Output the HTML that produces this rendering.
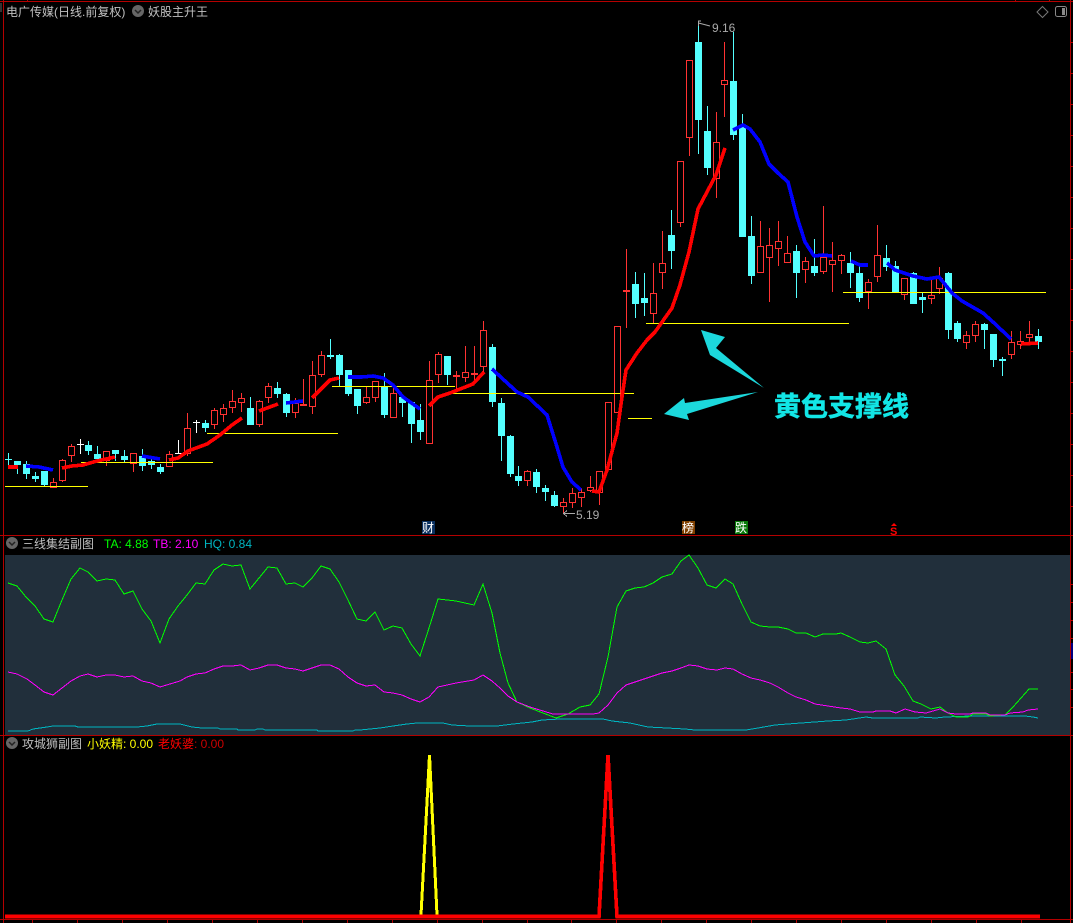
<!DOCTYPE html>
<html><head><meta charset="utf-8"><style>
html,body{margin:0;padding:0;background:#000;width:1073px;height:923px;overflow:hidden}
svg{display:block}
text{font-family:"WenQuanYi Zen Hei","Liberation Sans","Noto Sans CJK SC",sans-serif;font-size:12px}
.l{font-family:"Liberation Sans",sans-serif}
</style></head><body>
<svg width="1073" height="923" viewBox="0 0 1073 923" xmlns="http://www.w3.org/2000/svg">
<rect width="1073" height="923" fill="#000"/>
<rect x="5" y="555" width="1065" height="180" fill="#212f3b"/>
<g shape-rendering="crispEdges">
<path fill="none" stroke="#b40000" d="M0 1.5H1073M3.5 0V923M1070.5 0V923M0 535.5H1073M0 735.5H1073M0 919.5H1073"/>
<path fill="none" stroke="#b40000" d="M27.5 0V1M1015.5 0V1M1049.5 0V1M437.5 920V923M482.5 920V923M527.5 920V923M571.5 920V923M616.5 920V923M392.5 920V923M347.5 920V923M302.5 920V923M257.5 920V923M212.5 920V923M167.5 920V923M122.5 920V923M77.5 920V923M32.5 920V923M661.5 920V923M706.5 920V923M751.5 920V923M796.5 920V923M841.5 920V923M886.5 920V923M931.5 920V923M976.5 920V923M1021.5 920V923M1071 197.5H1073M1071 228.5H1073M1071 259.5H1073M1071 289.5H1073M1071 320.5H1073M1071 351.5H1073M1071 382.5H1073M1071 166.5H1073M1071 135.5H1073M1071 104.5H1073M1071 73.5H1073M1071 42.5H1073M1071 413.5H1073M1071 444.5H1073M1071 475.5H1073M1071 506.5H1073M1071 584.5H1073M1071 602.5H1073M1071 620.5H1073M1071 638.5H1073M1071 672.5H1073M1071 689.5H1073M1071 707.5H1073"/>
<rect x="1071" y="643" width="2" height="16" fill="#000080"/>
<rect x="0" y="3" width="2" height="9" fill="#333"/>

<!-- wicks -->
<path fill="none" stroke="#ff3232" d="M53.5 478V488M62.5 459V482M71.5 444V462M106.5 451V466M133.5 453V472M169.5 451V467M187.5 413V456M214.5 408V429M223.5 404V422M232.5 390V413M241.5 393V412M259.5 400V427M268.5 383V403M295.5 398V418M303.5 379V405M312.5 361V414M321.5 351V377M366.5 387V404M375.5 381V402M393.5 386V418M429.5 361V444M438.5 352V383M456.5 371V389M465.5 346V382M474.5 346V384M483.5 321V374M527.5 470V486M563.5 498V514M572.5 488V508M581.5 488V507M590.5 476V492M599.5 471V505M626.5 249V328M653.5 263V323M662.5 231V289M680.5 161V227M689.5 60V156M716.5 112V198M724.5 42V117M760.5 221V273M769.5 228V302M778.5 221V266M787.5 236V263M805.5 257V283M823.5 206V274M832.5 242V292M841.5 254V274M868.5 279V309M877.5 225V282M904.5 278V300M931.5 280V304M939.5 267V294M966.5 331V349M975.5 321V342M1011.5 331V359M1020.5 331V349M1029.5 321V345"/>
<path fill="none" stroke="#54ffff" d="M8.5 453V466M17.5 461V474M26.5 461V479M35.5 472V482M44.5 471V487M88.5 441V455M97.5 446V461M115.5 450V461M124.5 450V462M142.5 449V471M151.5 459V469M160.5 464V474M205.5 420V432M250.5 397V425M277.5 382V398M286.5 393V417M330.5 339V359M339.5 354V386M348.5 370V396M357.5 389V414M384.5 373V418M402.5 395V417M411.5 401V443M420.5 404V440M447.5 356V385M492.5 344V407M501.5 398V461M510.5 435V477M518.5 466V486M536.5 469V493M545.5 485V501M554.5 491V507M635.5 272V318M644.5 273V316M671.5 210V269M698.5 21V154M707.5 106V175M733.5 32V140M742.5 114V237M751.5 216V284M796.5 245V298M814.5 239V276M850.5 252V288M859.5 266V302M886.5 245V271M895.5 261V292M913.5 272V304M922.5 293V313M948.5 272V339M957.5 321V342M984.5 323V349M993.5 334V367M1002.5 357V376M1038.5 329V349"/>
<path fill="none" stroke="#ffffff" d="M80.5 439V454M77 444.5H84M178.5 440V454M175 453.5H182M196.5 420V433M193 422.5H200"/>

<!-- hollow red bodies -->
<g fill="#000" stroke="#ff3232">
<rect x="50.5" y="482.5" width="6" height="5"/><rect x="59.5" y="460.5" width="6" height="20"/><rect x="68.5" y="446.5" width="6" height="9"/><rect x="103.5" y="451.5" width="6" height="9"/><rect x="130.5" y="453.5" width="6" height="10"/><rect x="166.5" y="454.5" width="6" height="12"/><rect x="184.5" y="428.5" width="6" height="25"/><rect x="211.5" y="410.5" width="6" height="14"/><rect x="220.5" y="408.5" width="6" height="6"/><rect x="229.5" y="401.5" width="6" height="6"/><rect x="238.5" y="398.5" width="6" height="4"/><rect x="256.5" y="401.5" width="6" height="23"/><rect x="265.5" y="386.5" width="6" height="11"/><rect x="292.5" y="403.5" width="6" height="9"/><rect x="309.5" y="375.5" width="6" height="31"/><rect x="318.5" y="355.5" width="6" height="19"/><rect x="363.5" y="397.5" width="6" height="5"/><rect x="372.5" y="381.5" width="6" height="16"/><rect x="390.5" y="393.5" width="6" height="24"/><rect x="426.5" y="380.5" width="6" height="63"/><rect x="435.5" y="354.5" width="6" height="20"/><rect x="462.5" y="372.5" width="6" height="5"/><rect x="471.5" y="373.5" width="6" height="1"/><rect x="480.5" y="330.5" width="6" height="36"/><rect x="524.5" y="471.5" width="6" height="9"/><rect x="560.5" y="502.5" width="6" height="4"/><rect x="569.5" y="493.5" width="6" height="9"/><rect x="578.5" y="492.5" width="6" height="5"/><rect x="587.5" y="487.5" width="6" height="3"/><rect x="596.5" y="471.5" width="6" height="21"/><rect x="605.5" y="402.5" width="6" height="67"/><rect x="614.5" y="326.5" width="6" height="86"/><rect x="623.5" y="290.5" width="6" height="1"/><rect x="650.5" y="293.5" width="6" height="20"/><rect x="659.5" y="263.5" width="6" height="9"/><rect x="677.5" y="161.5" width="6" height="61"/><rect x="686.5" y="60.5" width="6" height="77"/><rect x="713.5" y="142.5" width="6" height="36"/><rect x="721.5" y="80.5" width="6" height="4"/><rect x="757.5" y="246.5" width="6" height="26"/><rect x="766.5" y="245.5" width="6" height="12"/><rect x="775.5" y="241.5" width="6" height="7"/><rect x="784.5" y="253.5" width="6" height="9"/><rect x="802.5" y="261.5" width="6" height="8"/><rect x="820.5" y="257.5" width="6" height="14"/><rect x="829.5" y="260.5" width="6" height="4"/><rect x="838.5" y="255.5" width="6" height="5"/><rect x="865.5" y="282.5" width="6" height="9"/><rect x="874.5" y="255.5" width="6" height="21"/><rect x="901.5" y="278.5" width="6" height="16"/><rect x="928.5" y="295.5" width="6" height="3"/><rect x="936.5" y="278.5" width="6" height="10"/><rect x="963.5" y="335.5" width="6" height="7"/><rect x="972.5" y="324.5" width="6" height="11"/><rect x="1008.5" y="342.5" width="6" height="12"/><rect x="1017.5" y="341.5" width="6" height="3"/><rect x="1026.5" y="334.5" width="6" height="3"/>
</g>
<g fill="#ff3232"><rect x="300" y="404" width="7" height="2"/><rect x="453" y="375" width="7" height="2"/></g>

<!-- cyan bodies -->
<g fill="#54ffff">
<rect x="5" y="459" width="7" height="1"/><rect x="14" y="461" width="7" height="4"/><rect x="23" y="464" width="7" height="10"/><rect x="32" y="476" width="7" height="3"/><rect x="41" y="471" width="7" height="14"/><rect x="85" y="445" width="7" height="6"/><rect x="94" y="454" width="7" height="5"/><rect x="112" y="450" width="7" height="4"/><rect x="121" y="456" width="7" height="4"/><rect x="139" y="456" width="7" height="10"/><rect x="148" y="461" width="7" height="4"/><rect x="157" y="467" width="7" height="5"/><rect x="202" y="423" width="7" height="5"/><rect x="247" y="408" width="7" height="17"/><rect x="274" y="388" width="7" height="6"/><rect x="283" y="394" width="7" height="19"/><rect x="327" y="355" width="7" height="2"/><rect x="336" y="355" width="7" height="20"/><rect x="345" y="370" width="7" height="24"/><rect x="354" y="389" width="7" height="17"/><rect x="381" y="387" width="7" height="28"/><rect x="399" y="397" width="7" height="6"/><rect x="408" y="402" width="7" height="22"/><rect x="417" y="420" width="7" height="12"/><rect x="444" y="356" width="7" height="19"/><rect x="489" y="347" width="7" height="55"/><rect x="498" y="403" width="7" height="33"/><rect x="507" y="436" width="7" height="38"/><rect x="515" y="476" width="7" height="5"/><rect x="533" y="472" width="7" height="15"/><rect x="542" y="488" width="7" height="4"/><rect x="551" y="495" width="7" height="11"/><rect x="632" y="284" width="7" height="20"/><rect x="641" y="298" width="7" height="5"/><rect x="668" y="235" width="7" height="16"/><rect x="695" y="42" width="7" height="78"/><rect x="704" y="131" width="7" height="37"/><rect x="730" y="81" width="7" height="54"/><rect x="739" y="127" width="7" height="110"/><rect x="748" y="236" width="7" height="40"/><rect x="793" y="251" width="7" height="22"/><rect x="811" y="266" width="7" height="7"/><rect x="847" y="263" width="7" height="10"/><rect x="856" y="273" width="7" height="25"/><rect x="883" y="258" width="7" height="9"/><rect x="892" y="266" width="7" height="26"/><rect x="910" y="273" width="7" height="31"/><rect x="919" y="297" width="7" height="3"/><rect x="945" y="273" width="7" height="57"/><rect x="954" y="323" width="7" height="16"/><rect x="981" y="324" width="7" height="6"/><rect x="990" y="334" width="7" height="26"/><rect x="999" y="359" width="7" height="2"/><rect x="1035" y="336" width="7" height="6"/>
</g>

<!-- support lines -->
<path fill="none" stroke="#ffff00" d="M5 486.5H88M81 462.5H213M207 433.5H338M332 386.5H455M449 393.5H634M628 418.5H652M646 323.5H849M843 292.5H1046"/>

<!-- moving average -->
<g fill="none" stroke-width="3.6" stroke-linejoin="round">
<g stroke="#ff0000">
<path d="M8 467H18"/>
<path d="M62 468L72 466L83 465L97 461L115 457"/>
<path d="M169 460L178 458L188 451L207 444L220 435L232 425L242 418"/>
<path d="M259 411L278 404"/>
<path d="M312 398L330 380L339 378"/>
<path d="M429 406L438 397L450 393L473 384L484 372"/>
<path d="M592 491L599 492L607 470L617 433L622 397L626 370L637 353L647 340L655 332L672 308L680 285L689 252L698 209L716 175L725 148"/>
<path d="M1021 344L1038 343"/>
</g>
<g stroke="#0000ff">
<path d="M26 466L39 467L53 470"/>
<path d="M142 456L160 459"/>
<path d="M286 403L303 401"/>
<path d="M348 377L362 377L373 376L383 378L393 385L403 397L420 409"/>
<path d="M492 369L517 392L528 397L547 415L557 447L563 467L572 482L581 490"/>
<path d="M733 130L743 125L750 129L760 142L769 164L778 173L788 182L797 217L805 242L814 256L823 255L832 256"/>
<path d="M851 261L860 265L868 265"/>
<path d="M887 263L895 270L913 276L927 279L939 277L952 293L962 301L983 313L993 322L1011 339"/>
</g>
</g>

<!-- sub panel lines -->
<g fill="none">
<path stroke="#00b4c0" d="M8 731L28 731L33 729L47 727L53 726L75 726L78 727L137 727L147 726L157 724L180 724L192 727L202 728L218 728L220 729L237 729L238 730L255 730L257 729L263 729L265 730L317 730L318 731L353 731L355 730L360 730L370 729L380 728L393 726L407 724L417 723L443 723L452 725L470 726L497 726L513 724L532 722L542 720L560 719L603 719L612 721L630 723L648 727L667 728L685 729L695 730L746 730L758 728L775 725L801 723L828 721L846 720L866 717L873 718L918 718L920 717L936 718L945 717L971 716L1025 716L1033 717L1038 718"/>
<path stroke="#00ff00" d="M8 583L17 586L26 597L35 606L44 619L53 622L62 600L71 579L80 568L88 572L97 581L106 579L115 580L124 594L133 591L142 609L151 621L160 643L169 619L178 606L187 595L196 583L205 584L214 570L223 564L232 566L241 565L250 589L259 578L268 567L277 568L286 584L295 583L303 587L312 578L321 566L330 569L339 582L348 600L357 619L366 621L375 612L384 630L393 626L402 628L411 644L420 656L429 628L438 599L447 600L456 601L465 603L474 605L483 584L492 613L500 653L508 683L517 702L530 708L543 713L556 718L568 714L580 707L590 705L599 694L608 657L617 607L626 591L635 588L644 587L653 583L662 577L672 574L681 561L689 555L698 568L707 585L716 588L725 579L733 584L742 604L751 622L760 626L770 627L778 627L788 629L796 633L806 633L815 637L823 634L836 634L841 633L850 637L860 642L868 643L876 641L886 649L895 675L904 686L913 701L921 704L931 709L940 707L948 713L956 717L968 717L973 714L986 714L990 716L1005 715L1013 707L1029 689L1038 689"/>
<path stroke="#ff00ff" d="M8 672L17 674L27 679L35 685L44 692L53 695L62 688L71 681L80 676L88 674L97 677L106 675L115 675L124 677L133 676L142 681L151 683L160 687L170 684L180 681L187 677L196 674L205 673L214 669L223 666L232 666L241 665L250 670L259 668L268 665L277 665L286 668L295 669L303 671L312 668L321 665L330 665L339 669L348 677L357 683L366 686L375 685L384 692L393 693L402 695L411 699L420 702L429 697L438 687L447 685L456 683L474 680L483 675L492 681L500 688L508 696L517 702L530 707L543 711L553 714L593 714L599 713L608 705L617 693L626 685L635 682L644 679L653 676L662 673L672 671L681 668L689 665L698 666L707 669L717 670L725 668L733 669L742 674L751 678L760 680L770 683L778 687L788 693L796 697L806 700L815 704L828 706L841 708L850 709L860 712L873 712L876 711L890 711L896 713L905 709L915 712L926 713L940 709L948 713L956 714L970 714L973 713L986 713L990 715L1005 715L1010 713L1023 712L1028 710L1038 709"/>
</g>

<!-- bottom panel -->
<g fill="none">
<path stroke="#ffff00" stroke-width="3" d="M421 915L429.5 755L437 915"/>
<path stroke="#ff0000" stroke-width="3.6" d="M5 916.5H599L608 755L617 916.5H1040"/>
</g>
</g>

<!-- annotation arrows -->
<polygon fill="#1cd8dc" points="701,330 725,337 716,348 764,388 710,355"/>
<polygon fill="#1cd8dc" points="664,414 684,398 685,403 758,392 687,414 689,420"/>
<text x="774" y="416" stroke="#12e6e6" stroke-width="0.5" style="font-family:'Noto Sans CJK SC','WenQuanYi Zen Hei',sans-serif;font-size:27px;font-weight:700" fill="#12e6e6">黄色支撑线</text>

<!-- header texts -->
<text x="6" y="16" fill="#c0c0c0">电广传媒(日线.前复权)</text>
<circle cx="138" cy="11" r="6" fill="#666"/><path d="M135 10l3 3l3-3" fill="none" stroke="#222" stroke-width="1.5"/>
<text x="148" y="16" fill="#c0c0c0">妖股主升王</text>
<path d="M1042.5 6.5L1048 12L1042.5 17.5L1037 12Z" fill="none" stroke="#777"/>
<rect x="1055.5" y="6.5" width="11" height="10" rx="2" fill="none" stroke="#888"/><rect x="1062" y="8" width="3" height="7" fill="#888"/>

<circle cx="12" cy="543" r="6" fill="#666"/><path d="M9 542l3 3l3-3" fill="none" stroke="#222" stroke-width="1.5"/>
<text x="22" y="548" fill="#c0c0c0">三线集结副图</text>
<text class="l" x="104" y="548" fill="#00ff00">TA: 4.88</text>
<text class="l" x="153" y="548" fill="#ff00ff">TB: 2.10</text>
<text class="l" x="204" y="548" fill="#00b4c0">HQ: 0.84</text>

<circle cx="12" cy="743" r="6" fill="#666"/><path d="M9 742l3 3l3-3" fill="none" stroke="#222" stroke-width="1.5"/>
<text x="22" y="748" fill="#c0c0c0">攻城狮副图</text>
<text x="87" y="748" fill="#ffff00">小妖精</text>
<text class="l" x="123" y="748" fill="#ffff00">: 0.00</text>
<text x="158" y="748" fill="#ff0000">老妖婆</text>
<text class="l" x="194" y="748" fill="#cc0000">: 0.00</text>

<!-- high/low labels -->
<path d="M575 513.5H563.5M567 510.5L563.5 513.5L567 516.5" fill="none" stroke="#aaa" shape-rendering="crispEdges"/>
<text class="l" x="576" y="519" fill="#aaa">5.19</text>
<path d="M710 26L698.5 23M701 21H698.5V26" fill="none" stroke="#aaa"/>
<text class="l" x="712" y="32" fill="#aaa">9.16</text>

<!-- tags -->
<rect x="422" y="521" width="13" height="13" fill="#0a3060"/><text x="422" y="532" fill="#fff">财</text>
<rect x="682" y="521" width="13" height="13" fill="#804000"/><text x="682" y="532" fill="#fff">榜</text>
<rect x="735" y="521" width="13" height="13" fill="#0a7a0a"/><text x="735" y="532" fill="#fff">跌</text>
<path d="M894 523L897 526H891Z" fill="#f00"/>
<text class="l" x="890" y="535" fill="#ff0000" style="font-size:11px;font-weight:700">S</text>
</svg>
</body></html>
